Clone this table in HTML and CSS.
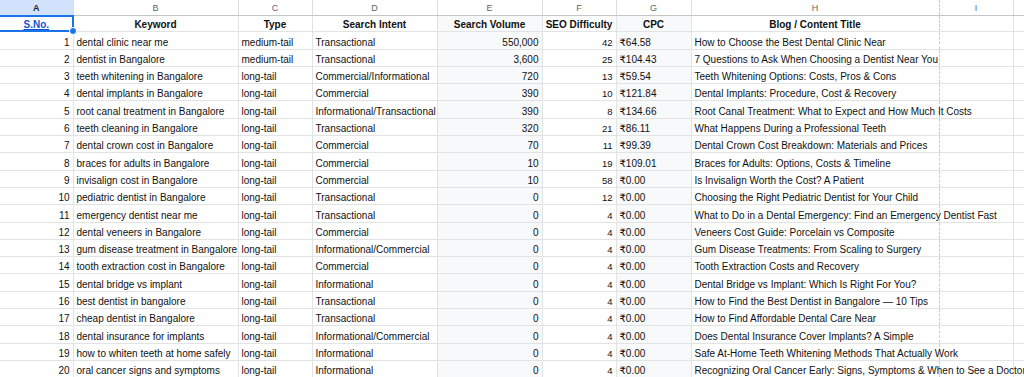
FILE: index.html
```html
<!DOCTYPE html>
<html lang="en">
<head>
  <meta charset="UTF-8" />
  <title>Dental SEO Keywords</title>
  <link rel="stylesheet" href="styles.css">
</head>
<body>
  <table class="hoja">
    <colgroup>
      <col class="c-a"><col class="c-b"><col class="c-c"><col class="c-d"><col class="c-e">
      <col class="c-f"><col class="c-g"><col class="c-h"><col class="c-i"><col class="c-j">
    </colgroup>
    <thead>
      <tr class="letras">
        <th class="activa">A</th><th>B</th><th>C</th><th>D</th><th>E</th>
        <th>F</th><th>G</th><th>H</th><th class="corte">I</th><th></th>
      </tr>
    </thead>
    <tbody id="filas">
      <tr class="titulos">
        <td class="sel"><a href="#">S.No.</a></td>
        <td>Keyword</td><td>Type</td><td>Search Intent</td><td class="gris">Search Volume</td>
        <td>SEO Difficulty</td><td class="gris">CPC</td><td class="titulo-h">Blog / Content Title</td><td class="corte"></td><td></td>
      </tr>
    </tbody>
  </table>

  <script>
    // datos de la hoja
    const datos = [
      ["dental clinic near me", "medium-tail", "Transactional", "550,000", 42, "₹64.58", "How to Choose the Best Dental Clinic Near"],
      ["dentist in Bangalore", "medium-tail", "Transactional", "3,600", 25, "₹104.43", "7 Questions to Ask When Choosing a Dentist Near You"],
      ["teeth whitening in Bangalore", "long-tail", "Commercial/Informational", "720", 13, "₹59.54", "Teeth Whitening Options: Costs, Pros & Cons"],
      ["dental implants in Bangalore", "long-tail", "Commercial", "390", 10, "₹121.84", "Dental Implants: Procedure, Cost & Recovery"],
      ["root canal treatment in Bangalore", "long-tail", "Informational/Transactional", "390", 8, "₹134.66", "Root Canal Treatment: What to Expect and How Much It Costs"],
      ["teeth cleaning in Bangalore", "long-tail", "Transactional", "320", 21, "₹86.11", "What Happens During a Professional Teeth"],
      ["dental crown cost in Bangalore", "long-tail", "Commercial", "70", 11, "₹99.39", "Dental Crown Cost Breakdown: Materials and Prices"],
      ["braces for adults in Bangalore", "long-tail", "Commercial", "10", 19, "₹109.01", "Braces for Adults: Options, Costs & Timeline"],
      ["invisalign cost in Bangalore", "long-tail", "Commercial", "10", 58, "₹0.00", "Is Invisalign Worth the Cost? A Patient"],
      ["pediatric dentist in Bangalore", "long-tail", "Transactional", "0", 12, "₹0.00", "Choosing the Right Pediatric Dentist for Your Child"],
      ["emergency dentist near me", "long-tail", "Transactional", "0", 4, "₹0.00", "What to Do in a Dental Emergency: Find an Emergency Dentist Fast"],
      ["dental veneers in Bangalore", "long-tail", "Commercial", "0", 4, "₹0.00", "Veneers Cost Guide: Porcelain vs Composite"],
      ["gum disease treatment in Bangalore", "long-tail", "Informational/Commercial", "0", 4, "₹0.00", "Gum Disease Treatments: From Scaling to Surgery"],
      ["tooth extraction cost in Bangalore", "long-tail", "Commercial", "0", 4, "₹0.00", "Tooth Extraction Costs and Recovery"],
      ["dental bridge vs implant", "long-tail", "Informational", "0", 4, "₹0.00", "Dental Bridge vs Implant: Which Is Right For You?"],
      ["best dentist in bangalore", "long-tail", "Transactional", "0", 4, "₹0.00", "How to Find the Best Dentist in Bangalore — 10 Tips"],
      ["cheap dentist in Bangalore", "long-tail", "Transactional", "0", 4, "₹0.00", "How to Find Affordable Dental Care Near"],
      ["dental insurance for implants", "long-tail", "Informational/Commercial", "0", 4, "₹0.00", "Does Dental Insurance Cover Implants? A Simple"],
      ["how to whiten teeth at home safely", "long-tail", "Informational", "0", 4, "₹0.00", "Safe At-Home Teeth Whitening Methods That Actually Work"],
      ["oral cancer signs and symptoms", "long-tail", "Informational", "0", 4, "₹0.00", "Recognizing Oral Cancer Early: Signs, Symptoms & When to See a Doctor"]
    ];

    const filas = document.getElementById("filas");

    datos.forEach(function (d, i) {
      const tr = document.createElement("tr");
      tr.innerHTML =
        '<td class="num">' + (i + 1) + '</td>' +
        '<td>' + d[0] + '</td>' +
        '<td>' + d[1] + '</td>' +
        '<td>' + d[2] + '</td>' +
        '<td class="num gris">' + d[3] + '</td>' +
        '<td class="num chico">' + d[4] + '</td>' +
        '<td class="gris">' + d[5] + '</td>' +
        '<td class="titulo-h">' + d[6].replace(/&/g, "&amp;") + '</td>' +
        '<td class="corte"></td><td></td>';
      filas.appendChild(tr);
    });
  </script>
</body>
</html>
```

FILE: styles.css
```css
body {
  margin: 0;
  background: #fff;
  overflow: hidden;
  font-family: "Liberation Sans", Arial, "DejaVu Sans", sans-serif;
  color: #000;
}

.hoja {
  border-collapse: collapse;
  table-layout: fixed;
  width: 1030px;
}

.c-a { width: 73px; }
.c-b { width: 165px; }
.c-c { width: 74px; }
.c-d { width: 125px; }
.c-e { width: 105px; }
.c-f { width: 74px; }
.c-g { width: 75px; }
.c-h { width: 248px; }
.c-i { width: 74px; }
.c-j { width: 17px; }

/* fila de letras */
.letras th {
  height: 15px;
  padding: 0;
  font-size: 9px;
  font-weight: normal;
  color: #5f6368;
  text-align: center;
  border-right: 1px solid #dadce0;
  border-bottom: 1px solid #c4c7c5;
  background: #fff;
}

.letras th.activa {
  background: #d3e3fd;
  color: #0b1f3f;
  font-weight: bold;
}

/* celdas */
td {
  height: 17.3px;
  padding: 0 3px 0 3px;
  box-sizing: border-box;
  font-size: 10px;
  line-height: 13px;
  vertical-align: bottom;
  white-space: nowrap;
  color: #111;
  border-right: 1px solid #e2e3e3;
  border-bottom: 1px solid #e2e3e3;
}

.titulos td {
  height: 16.3px;
  font-weight: bold;
  text-align: center;
}

.titulos td.sel {
  position: relative;
}

.sel a {
  color: #1155cc;
  text-decoration: underline;
}

/* marco de seleccion */
.sel::before {
  content: "";
  position: absolute;
  left: -2px;
  top: -1px;
  right: -1px;
  bottom: -1px;
  border: 2px solid #1a73e8;
}

.sel::after {
  content: "";
  position: absolute;
  right: -4px;
  bottom: -4px;
  width: 6px;
  height: 6px;
  border-radius: 50%;
  background: #1a73e8;
  border: 1px solid #fff;
}

.num {
  text-align: right;
}

.chico {
  font-size: 9.5px;
}

.gris {
  background: #f8f9fa;
}

td.titulo-h,
.letras th:nth-child(8) {
  border-right: 1px dashed #c9cbcd;
}

.titulos td.titulo-h {
  text-align: center;
}
```
